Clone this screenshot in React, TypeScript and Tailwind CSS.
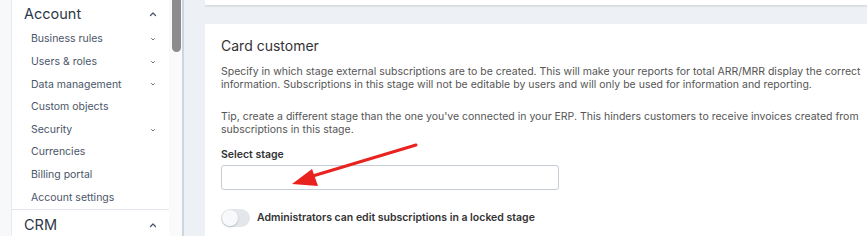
import React from "react";

const Up = () => (
  <svg width="10" height="10" viewBox="0 0 10 10" fill="none" stroke="#4a5568" strokeWidth="1.3" strokeLinecap="round" strokeLinejoin="round">
    <path d="M2.5 6.5 L5 4 L7.5 6.5" />
  </svg>
);
const Down = () => (
  <svg width="8" height="8" viewBox="0 0 8 8" fill="none" stroke="#6b7280" strokeWidth="1" strokeLinecap="round" strokeLinejoin="round">
    <path d="M2.5 3.5 L4 5 L5.5 3.5" />
  </svg>
);

const items: [string, boolean][] = [
  ["Business rules", true],
  ["Users & roles", true],
  ["Data management", true],
  ["Custom objects", false],
  ["Security", true],
  ["Currencies", false],
  ["Billing portal", false],
  ["Account settings", false],
];

export default function App() {
  return (
    <div className="relative flex h-[236px] w-[867px] overflow-hidden bg-[#edf0f4]" style={{ fontFamily: "Inter, 'Noto Sans', sans-serif" }}>
      {/* left strip */}
      <div className="w-[12px] shrink-0 border-r border-[#e6e9ee] bg-[#f7f8fa]" />
      {/* sidebar */}
      <div className="flex w-[157px] shrink-0 flex-col overflow-hidden bg-white">
        <div className="flex h-[28px] shrink-0 items-center justify-between pl-[12px] pr-[11px]">
          <span className="text-[14.5px] text-[#2d3748]">Account</span>
          <Up />
        </div>
        {items.map(([t, c]) => (
          <div key={t} className="flex h-[22.6px] shrink-0 items-center justify-between pl-[19px] pr-[12px]">
            <span className="text-[10.5px] text-[#4a5568]">{t}</span>
            {c && <Down />}
          </div>
        ))}
        <div className="shrink-0 border-t border-[#e3e7ed]" />
        <div className="flex h-[30px] shrink-0 items-center justify-between pl-[12px] pr-[11px]">
          <span className="text-[14.5px] text-[#2d3748]">CRM</span>
          <Up />
        </div>
      </div>
      {/* scrollbar */}
      <div className="relative w-[15px] shrink-0 border-r-2 border-[#cdd5e0] bg-[#fafafa]">
        <div className="ml-[3px] h-[52px] w-[9px] rounded-b-[5px] bg-[#8c8c8c]" />
      </div>
      {/* main */}
      <div className="flex min-w-0 flex-1 flex-col pl-[21px]">
        <div className="h-[6px] w-[700px] shrink-0 border-b border-[#d7dbe1] bg-white shadow-[0_1px_1px_rgba(0,0,0,0.05)]" />
        <div className="mt-[18px] w-[700px] flex-1 bg-white pl-[16px] pt-[13px]">
          <div className="text-[14px] leading-[18px] text-[#333]">Card customer</div>
          <p className="mt-[10px] w-[645px] text-[10.5px] leading-[13px] text-[#555]">
            Specify in which stage external subscriptions are to be created. This will make your reports for total ARR/MRR display the correct information. Subscriptions in this stage will not be editable by users and will only be used for information and reporting.
          </p>
          <p className="mt-[19px] w-[645px] text-[10.5px] leading-[13px] text-[#555]">
            Tip, create a different stage than the one you've connected in your ERP. This hinders customers to receive invoices created from subscriptions in this stage.
          </p>
          <div className="mt-[12px] text-[10.5px] font-semibold leading-[14px] text-[#333]">Select stage</div>
          <div className="mt-[3px] h-[25px] w-[338px] rounded-[3px] border border-[#c5ccd6] bg-white" />
          <div className="mt-[19px] flex items-center gap-[7px]">
            <div className="relative h-[18px] w-[29px] rounded-full bg-[#e3e7ec]">
              <div className="absolute left-[1px] top-[1px] h-[16px] w-[16px] rounded-full bg-[#f8f9fb] shadow-[0_1px_2px_rgba(0,0,0,0.2)]" />
            </div>
            <span className="text-[10.5px] font-semibold text-[#333]">Administrators can edit subscriptions in a locked stage</span>
          </div>
        </div>
      </div>
      {/* red arrow */}
      <svg className="pointer-events-none absolute left-0 top-0" width="867" height="236" viewBox="0 0 867 236">
        <line x1="416" y1="145" x2="306" y2="178" stroke="#e8231f" strokeWidth="3" strokeLinecap="round" />
        <polygon points="292,184 312,169 318,186" fill="#e8231f" />
      </svg>
    </div>
  );
}
